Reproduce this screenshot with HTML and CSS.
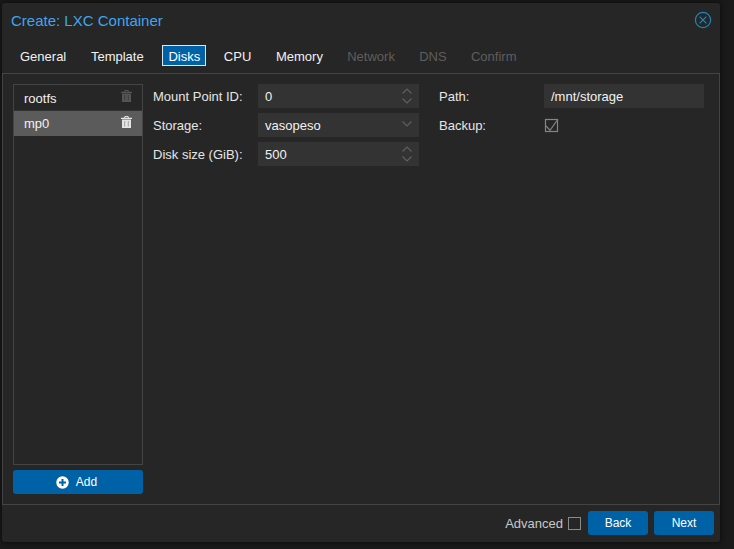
FILE: index.html
```html
<!DOCTYPE html>
<html lang="en">
<head>
    <meta charset="UTF-8">
    <meta name="viewport" content="width=device-width, initial-scale=1.0">
    <title>Create: LXC Container</title>
    <link rel="stylesheet" href="styles.css">
</head>
<body>
    <div class="window">
        <div class="title-bar">
            <span class="title">Create: LXC Container</span>
            <svg class="close" width="18" height="18" viewBox="0 0 18 18">
                <circle cx="9" cy="9" r="7.6"/>
                <path d="M5.6 5.6 L12.4 12.4 M12.4 5.6 L5.6 12.4"/>
            </svg>
        </div>
        <div class="tabs">
            <span class="tab">General</span>
            <span class="tab">Template</span>
            <span class="tab active">Disks</span>
            <span class="tab">CPU</span>
            <span class="tab">Memory</span>
            <span class="tab disabled">Network</span>
            <span class="tab disabled">DNS</span>
            <span class="tab disabled">Confirm</span>
        </div>
        <div class="panel">
            <div class="disks">
                <div class="disk-list">
                    <div class="disk-row first">
                        <span>rootfs</span>
                        <svg class="trash dim" width="11" height="12" viewBox="0 0 11 12">
                            <path fill-rule="evenodd" d="M0 1.8 H3 L3.8 0 H7.2 L8 1.8 H11 V3 H0 Z M4.4 1 L4.1 1.8 H6.9 L6.6 1 Z M1 3.6 H10 V12 H1 Z M3.6 5 V10.6 H4.1 V5 Z M6.9 5 V10.6 H7.4 V5 Z"/>
                        </svg>
                    </div>
                    <div class="disk-row selected">
                        <span>mp0</span>
                        <svg class="trash" width="11" height="12" viewBox="0 0 11 12">
                            <path fill-rule="evenodd" d="M0 1.8 H3 L3.8 0 H7.2 L8 1.8 H11 V3 H0 Z M4.4 1 L4.1 1.8 H6.9 L6.6 1 Z M1 3.6 H10 V12 H1 Z M3.6 5 V10.6 H4.1 V5 Z M6.9 5 V10.6 H7.4 V5 Z"/>
                        </svg>
                    </div>
                </div>
                <button type="button" class="btn add-btn">
                    <svg width="13" height="13" viewBox="0 0 13 13">
                        <circle cx="6.5" cy="6.5" r="6.2" fill="#fff"/>
                        <path d="M6.5 3 V10 M3 6.5 H10" stroke="#0062a6" stroke-width="2"/>
                    </svg>
                    Add
                </button>
            </div>
            <div class="form">
                <div class="form-col">
                    <div class="form-group">
                        <label>Mount Point ID:</label>
                        <div class="field">
                            <span>0</span>
                            <svg class="arrows" width="12" height="18" viewBox="0 0 12 18"><path d="M1.5 6.5 L6 2 L10.5 6.5 M1.5 11.5 L6 16 L10.5 11.5"/></svg>
                        </div>
                    </div>
                    <div class="form-group">
                        <label>Storage:</label>
                        <div class="field">
                            <span>vasopeso</span>
                            <svg class="arrows" width="12" height="18" viewBox="0 0 12 18"><path d="M1.5 5.5 L6 10 L10.5 5.5"/></svg>
                        </div>
                    </div>
                    <div class="form-group">
                        <label>Disk size (GiB):</label>
                        <div class="field">
                            <span>500</span>
                            <svg class="arrows" width="12" height="18" viewBox="0 0 12 18"><path d="M1.5 6.5 L6 2 L10.5 6.5 M1.5 11.5 L6 16 L10.5 11.5"/></svg>
                        </div>
                    </div>
                </div>
                <div class="form-col right">
                    <div class="form-group">
                        <label>Path:</label>
                        <div class="field"><span>/mnt/storage</span></div>
                    </div>
                    <div class="form-group">
                        <label>Backup:</label>
                        <div class="checkbox-wrap">
                            <svg class="checkbox" width="13" height="13" viewBox="0 0 13 13">
                                <rect x="0.5" y="0.5" width="12" height="12"/>
                                <path d="M1.2 7 L5 11.4 L12.4 1"/>
                            </svg>
                        </div>
                    </div>
                </div>
            </div>
        </div>
        <div class="footer">
            <span class="advanced-label">Advanced</span>
            <span class="advanced-box"></span>
            <button type="button" class="btn nav-btn">Back</button>
            <button type="button" class="btn nav-btn">Next</button>
        </div>
    </div>
</body>
</html>
```

FILE: styles.css
```css
html, body {
    height: 100%;
}
body {
    margin: 0;
    background-color: #1a1a1a;
    font-family: "Liberation Sans", Arial, sans-serif;
    font-size: 13px;
    color: #f2f2f2;
    overflow: hidden;
}
.window {
    box-sizing: border-box;
    width: 718px;
    height: 539px;
    margin: 3px 0 0 2px;
    background-color: #262626;
    border-radius: 3px;
    box-shadow: 0 0 5px 1px rgba(0,0,0,0.5);
    display: flex;
    flex-direction: column;
}
.title-bar {
    box-sizing: border-box;
    height: 42px;
    padding: 8px 8px 0 9px;
    display: flex;
    justify-content: space-between;
    align-items: flex-start;
    flex-shrink: 0;
}
.title {
    font-size: 15px;
    line-height: 20px;
    color: #3fa5f0;
}
.close {
    fill: none;
    stroke: #1d86ba;
    stroke-width: 1.2;
}
.tabs {
    height: 28px;
    padding-left: 9px;
    display: flex;
    align-items: flex-start;
    gap: 6.7px;
    flex-shrink: 0;
}
.tab {
    height: 21px;
    line-height: 24px;
    padding: 0 9px;
}
.tab.active {
    box-sizing: border-box;
    background-color: #0062a6;
    border: 1px solid #d9e8f2;
    line-height: 22px;
    padding: 0 5px;
    margin: 0 2px 0 3px;
    color: #fff;
}
.tab.disabled {
    color: #5e5e5e;
    margin-left: -0.4px;
}
.panel {
    flex: 1;
    display: flex;
    border: 1px solid #444;
    padding: 10px 0 10px 10px;
    min-height: 0;
}
.disks {
    width: 130px;
    display: flex;
    flex-direction: column;
    gap: 5px;
    flex-shrink: 0;
}
.disk-list {
    flex: 1;
    border: 1px solid #444;
    box-sizing: border-box;
}
.disk-row {
    height: 25px;
    padding: 0 10px;
    display: flex;
    justify-content: space-between;
    align-items: center;
    box-sizing: border-box;
}
.disk-row.first span {
    margin-top: 2px;
}
.disk-row.first {
    height: 26px;
    border-bottom: 1px solid #333;
}
.disk-row.selected {
    background-color: #5b5b5b;
}
.trash {
    fill: #e4e4e4;
    margin-top: -3px;
}
.trash.dim {
    fill: #555;
}
.btn {
    background-color: #0062a6;
    color: #fff;
    border: none;
    border-radius: 3px;
    font-family: "Liberation Sans", Arial, sans-serif;
    font-size: 12px;
    height: 24px;
    padding: 0;
}
.add-btn {
    display: flex;
    justify-content: center;
    align-items: center;
    gap: 7px;
    padding-right: 3px;
    flex-shrink: 0;
}
.form {
    margin-left: 10px;
    display: flex;
}
.form-col {
    width: 266px;
    display: flex;
    flex-direction: column;
    gap: 5px;
}
.form-col.right {
    width: 265px;
    margin-left: 20px;
}
.form-group {
    display: flex;
    align-items: center;
    height: 24px;
}
.form-group label {
    width: 105px;
    flex-shrink: 0;
    color: #e6e6e6;
}
.field {
    box-sizing: border-box;
    width: 161px;
    height: 24px;
    background-color: #333;
    padding: 0 6px 0 7px;
    display: flex;
    justify-content: space-between;
    align-items: center;
}
.right .field {
    width: 160px;
}
.arrows {
    fill: none;
    stroke: #5f5f5f;
    stroke-width: 1.2;
}
.checkbox-wrap {
    display: flex;
    padding-left: 1px;
}
.checkbox {
    fill: none;
    stroke: #858585;
    stroke-width: 1.2;
    overflow: visible;
}
.footer {
    box-sizing: border-box;
    height: 37px;
    padding: 0 6px 1px 0;
    display: flex;
    justify-content: flex-end;
    align-items: center;
    flex-shrink: 0;
}
.advanced-label {
    color: #c8c8c8;
    margin-right: 5px;
}
.advanced-box {
    box-sizing: border-box;
    width: 13px;
    height: 13px;
    border: 1px solid #8a8a8a;
    margin-right: 7px;
}
.nav-btn {
    width: 60px;
    margin-left: 6px;
}
.advanced-box + .nav-btn {
    margin-left: 0;
}
```
